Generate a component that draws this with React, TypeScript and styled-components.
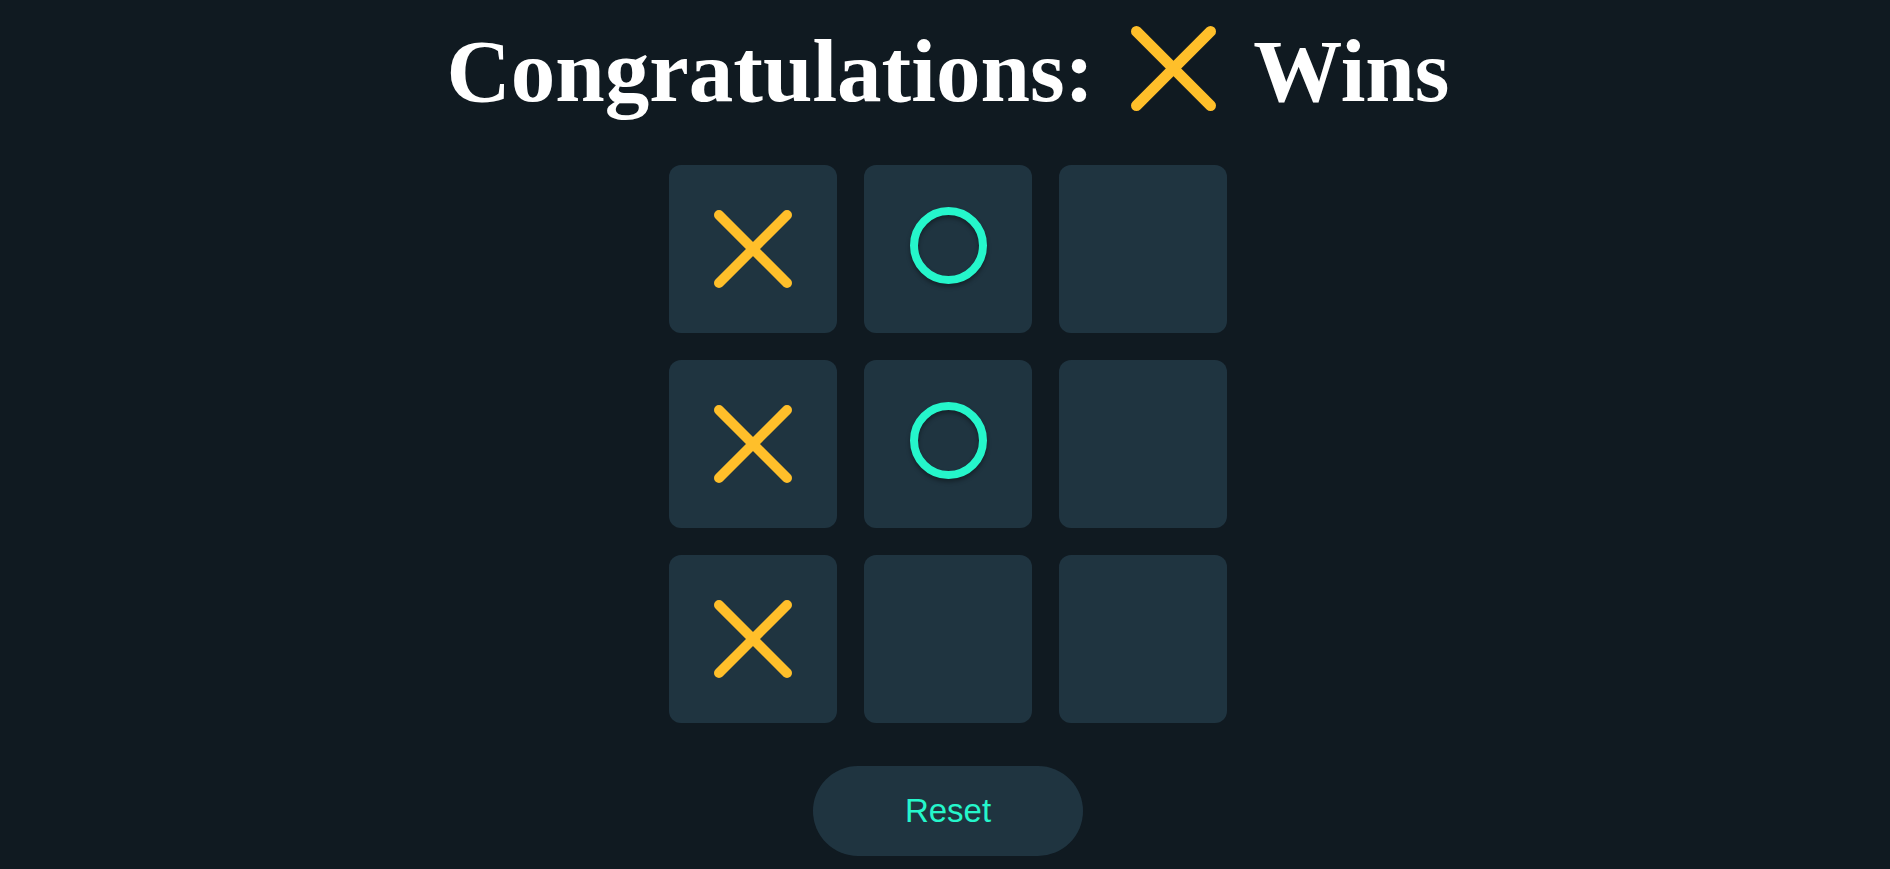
import React, { useState } from "react";
import styled, { createGlobalStyle } from "styled-components";

type Mark = "x" | "o" | null;

const GlobalStyle = createGlobalStyle`
  html, body {
    margin: 0;
    padding: 0;
    background: #101a21;
  }
  * {
    box-sizing: border-box;
  }
`;

const Page = styled.main`
  min-height: 100vh;
  display: flex;
  flex-direction: column;
  align-items: center;
  padding-top: 20px;
  padding-left: 6px;
`;

const Title = styled.h1`
  margin: 0;
  display: flex;
  align-items: center;
  gap: 37px;
  font-family: "Liberation Serif", "Times New Roman", serif;
  font-weight: 700;
  font-size: 89px;
  line-height: 1.15;
  color: #ffffff;

  svg {
    margin-bottom: 5px;
  }
`;

const Board = styled.div`
  margin-top: 43px;
  display: grid;
  grid-template-columns: repeat(3, 168px);
  grid-auto-rows: 168px;
  gap: 27px;
`;

const Cell = styled.button`
  display: flex;
  align-items: center;
  justify-content: center;
  padding: 0;
  border: none;
  border-radius: 12px;
  background: #1f3440;
  cursor: pointer;
`;

const Circle = styled.div`
  width: 77px;
  height: 77px;
  margin-bottom: 8px;
  border-radius: 50%;
  border: 8px solid #25f6cb;
  filter: drop-shadow(0 3px 2px rgba(0, 0, 0, 0.35));
`;

const ResetButton = styled.button`
  margin-top: 43px;
  width: 270px;
  height: 90px;
  border: none;
  border-radius: 45px;
  background: #1f3440;
  color: #25f6cb;
  font-family: "Liberation Sans", Arial, sans-serif;
  font-size: 33px;
  cursor: pointer;
`;

const Cross = ({ size = 78 }: { size?: number }) => (
  <svg width={size} height={size} viewBox="0 0 78 78" fill="none">
    <g stroke="#ffbf2a" strokeWidth="10" strokeLinecap="round">
      <line x1="5" y1="5" x2="73" y2="73" />
      <line x1="73" y1="5" x2="5" y2="73" />
    </g>
  </svg>
);

const start: Mark[] = ["x", "o", null, "x", "o", null, "x", null, null];

const App = () => {
  const [cells, setCells] = useState<Mark[]>(start);

  return (
    <>
      <GlobalStyle />
      <Page>
        <Title>
          <span>Congratulations:</span>
          <Cross size={85} />
          <span>Wins</span>
        </Title>

        <Board>
          {cells.map((mark, i) => (
            <Cell key={i}>
              {mark === "x" && <Cross />}
              {mark === "o" && <Circle />}
            </Cell>
          ))}
        </Board>

        <ResetButton onClick={() => setCells(Array(9).fill(null))}>
          Reset
        </ResetButton>
      </Page>
    </>
  );
};

export default App;
